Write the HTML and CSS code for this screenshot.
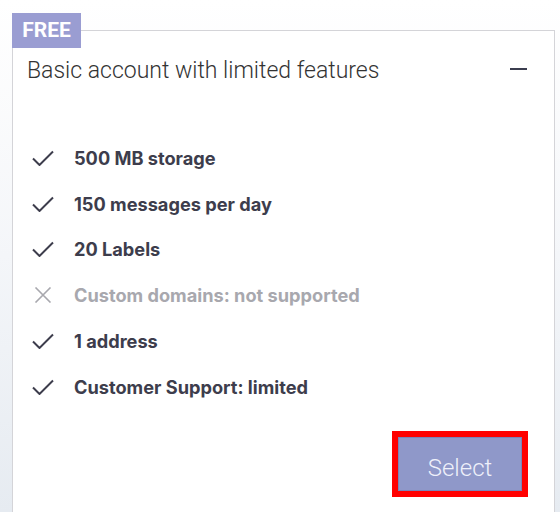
FILE: index.html
```html
<!DOCTYPE html>
<html lang="en">
<head>
  <meta charset="UTF-8">
  <meta name="viewport" content="width=device-width, initial-scale=1">
  <title>Plans - Free</title>
  <link rel="stylesheet" href="styles.css">
</head>
<body>
  <div class="plan-card">
    <span class="plan-badge">FREE</span>

    <div class="plan-header">
      <h2 class="plan-title">Basic account with limited features</h2>
      <button class="collapse-btn" aria-label="Collapse"><span></span></button>
    </div>

    <ul class="feature-list">
      <li class="feature">
        <svg class="icon" viewBox="0 0 22 16"><path d="M1 8.5l6.5 6.5L21 1.5"/></svg>
        500 MB storage
      </li>
      <li class="feature">
        <svg class="icon" viewBox="0 0 22 16"><path d="M1 8.5l6.5 6.5L21 1.5"/></svg>
        150 messages per day
      </li>
      <li class="feature">
        <svg class="icon" viewBox="0 0 22 16"><path d="M1 8.5l6.5 6.5L21 1.5"/></svg>
        20 Labels
      </li>
      <li class="feature disabled">
        <svg class="icon" viewBox="0 0 22 16"><path d="M3.5 0.5l15 15M18.5 0.5l-15 15"/></svg>
        Custom domains: not supported
      </li>
      <li class="feature">
        <svg class="icon" viewBox="0 0 22 16"><path d="M1 8.5l6.5 6.5L21 1.5"/></svg>
        1 address
      </li>
      <li class="feature">
        <svg class="icon" viewBox="0 0 22 16"><path d="M1 8.5l6.5 6.5L21 1.5"/></svg>
        Customer Support: limited
      </li>
    </ul>

    <div class="plan-footer">
      <button class="select-btn">Select</button>
    </div>
  </div>
</body>
</html>
```

FILE: styles.css
```css
html, body {
  height: 100%;
}
body {
  margin: 0;
  font-family: Inter, Roboto, "Liberation Sans", sans-serif;
  background: linear-gradient(180deg, #ffffff 0%, #f4f6f9 50%, #e6ebf1 100%);
  overflow: hidden;
}
.plan-card {
  position: relative;
  margin: 30px 0 0 12px;
  width: 543px;
  height: 520px;
  background-color: #fff;
  border: 1px solid #d4d4d8;
  box-sizing: border-box;
}
.plan-badge {
  position: absolute;
  top: -18px;
  left: -1px;
  width: 69px;
  height: 35px;
  background-color: #9a9dd2;
  color: #fff;
  font-family: Roboto, "Liberation Sans", sans-serif;
  font-weight: 700;
  font-size: 21px;
  line-height: 35px;
  text-align: center;
}
.plan-header {
  display: flex;
  align-items: center;
  justify-content: space-between;
  padding: 25px 27px 0 14px;
}
.plan-title {
  margin: 0;
  font-family: Roboto, "Liberation Sans", sans-serif;
  font-size: 23px;
  font-weight: 300;
  color: #333;
  line-height: 30px;
}
.collapse-btn {
  width: 18px;
  height: 18px;
  margin-bottom: 4px;
  padding: 0;
  border: none;
  background: none;
  display: flex;
  align-items: center;
  justify-content: center;
}
.collapse-btn span {
  display: block;
  width: 17px;
  height: 2px;
  background-color: #3b3d4f;
}
.feature-list {
  list-style: none;
  margin: 0;
  padding: 49px 0 0 19px;
}
.feature {
  display: flex;
  align-items: center;
  gap: 20px;
  height: 45.8px;
  font-size: 18.2px;
  font-weight: 700;
  color: #3d3d4c;
}
.feature .icon {
  width: 22px;
  height: 16px;
  fill: none;
  stroke: #3d3d4c;
  stroke-width: 2;
}
.feature.disabled {
  color: #a8a8ae;
}
.feature.disabled .icon {
  stroke: #a8a8ae;
  stroke-width: 1.6;
}
.plan-footer {
  display: flex;
  justify-content: flex-end;
  padding: 21px 26px 0 0;
}
.select-btn {
  width: 136px;
  height: 66px;
  padding: 9px 0 0;
  background-color: #8f98c9;
  border: 6px solid #ff0000;
  box-shadow: inset 0 0 0 1px #7b84b8;
  color: #eef0fa;
  font-family: Roboto, "Liberation Sans", sans-serif;
  font-size: 24px;
  font-weight: 300;
  cursor: pointer;
}
```
